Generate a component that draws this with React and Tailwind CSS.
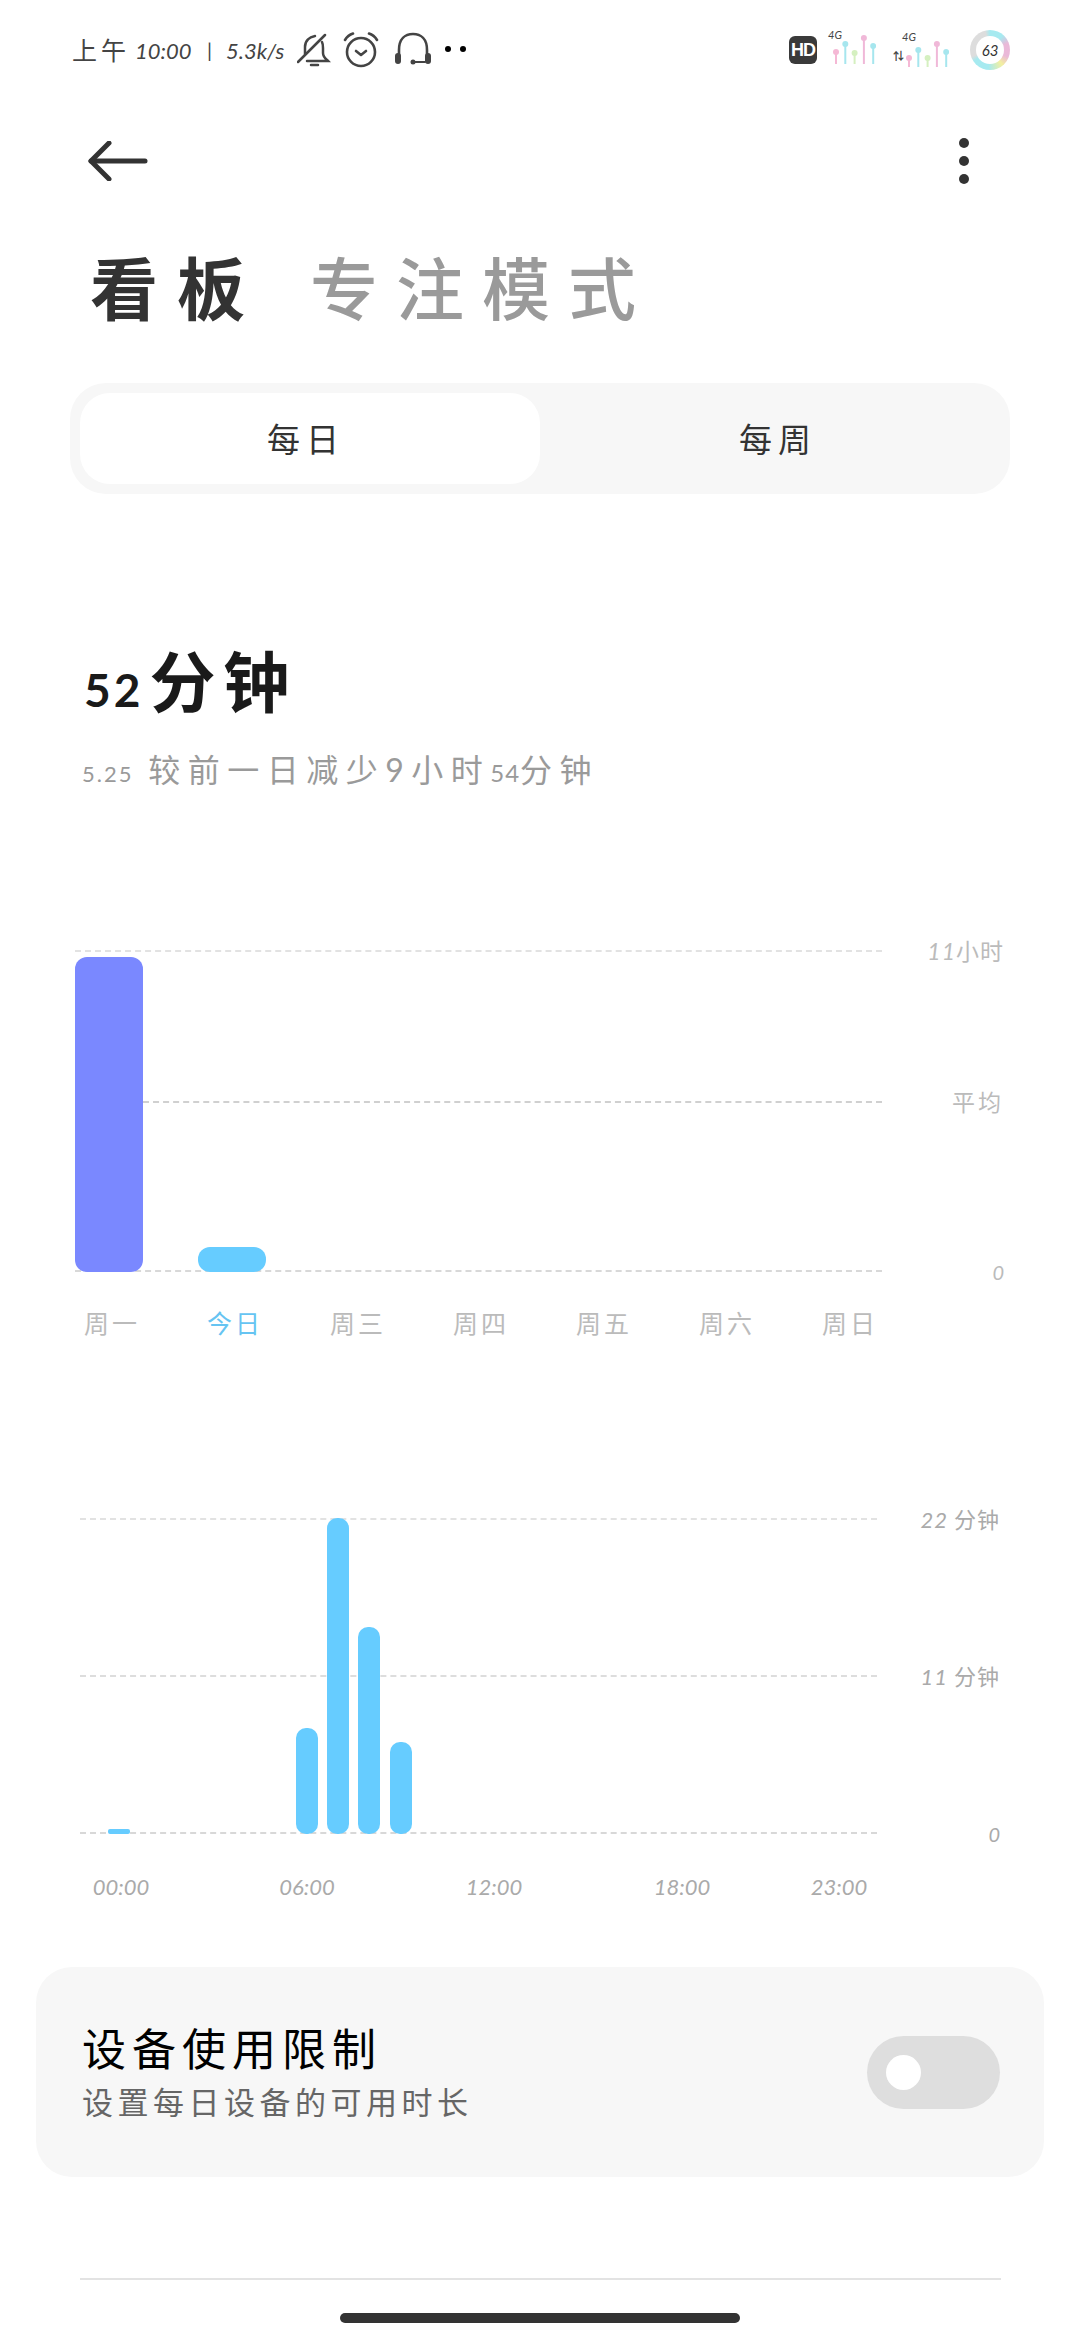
const cjk = "font-['Noto_Sans_CJK_SC','Lato',sans-serif]";

const weekBars = [
  { label: "周一", height: "h-[315px]", color: "bg-[#7a88ff]", text: "text-[#bbbbbb]" },
  { label: "今日", height: "h-[25px]", color: "bg-[#66ccff]", text: "text-[#66c4f2]" },
  { label: "周三", height: "h-0", color: "", text: "text-[#bbbbbb]" },
  { label: "周四", height: "h-0", color: "", text: "text-[#bbbbbb]" },
  { label: "周五", height: "h-0", color: "", text: "text-[#bbbbbb]" },
  { label: "周六", height: "h-0", color: "", text: "text-[#bbbbbb]" },
  { label: "周日", height: "h-0", color: "", text: "text-[#bbbbbb]" },
];

const hours = [
  { label: "00:00", margin: "ml-0" },
  { label: "06:00", margin: "ml-[128px]" },
  { label: "12:00", margin: "ml-[129px]" },
  { label: "18:00", margin: "ml-[130px]" },
  { label: "23:00", margin: "ml-[99px]" },
];

function Pins({ tops, className }) {
  const colors = ["#f5b8d5", "#a6e6ee", "#d5f0c0", "#f0b8d8", "#a6e6ee"];
  return (
    <svg width="48" height="36" viewBox="0 0 48 36" className={className}>
      {tops.map((t, i) => (
        <g key={i}>
          <line x1={8 + i * 9.3} y1={t} x2={8 + i * 9.3} y2="32" stroke={colors[i]} strokeWidth="2" />
          <circle cx={8 + i * 9.3} cy={t} r="3" fill={colors[i]} />
        </g>
      ))}
    </svg>
  );
}

function StatusBar() {
  return (
    <div className={`flex items-center h-[40px] mt-[30px] pl-[72px] pr-[70px] text-[#444444] ${cjk}`}>
      <span className="text-[25px] tracking-[4px] w-[63px] whitespace-nowrap">上午</span>
      <span className="text-[22px] italic font-['Lato'] w-[72px]">10:00</span>
      <span className="text-[20px] font-['Lato'] w-[19px]">|</span>
      <span className="text-[22px] italic font-['Lato'] w-[71px]">5.3k/s</span>
      <svg width="34" height="34" viewBox="0 0 34 34" fill="none" stroke="#444444" strokeWidth="2.5" strokeLinecap="round">
        <path d="M1 29 L28 2" />
        <path d="M8 21 V14 C8 8 12 4 18 3" />
        <path d="M25 9 C26 11 26 13 26 15 V20 C26 24 29 26 31 28 H10" />
        <path d="M14 32 H21" />
      </svg>
      <svg width="36" height="36" viewBox="0 0 36 36" fill="none" stroke="#444444" strokeWidth="2.6" strokeLinecap="round" strokeLinejoin="round" className="ml-[12px]">
        <circle cx="18" cy="20" r="14" />
        <path d="M13 19 L18 23 L23 19" />
        <path d="M2 8 Q5 3 10 1.5" />
        <path d="M34 8 Q31 3 26 1.5" />
      </svg>
      <svg width="38" height="36" viewBox="0 0 38 36" fill="none" stroke="#444444" strokeWidth="2.6" strokeLinecap="round" className="ml-[15px]">
        <path d="M5 26 V18 C5 7 11 2 19 2 C27 2 33 7 33 18 V26" />
        <circle cx="19" cy="30" r="2.5" fill="#444444" stroke="none" />
        <path d="M19 30 H31" strokeWidth="2" />
        <rect x="1" y="21" width="6" height="11" rx="3" fill="#444444" stroke="none" />
        <rect x="31" y="21" width="6" height="11" rx="3" fill="#444444" stroke="none" />
      </svg>
      <div className="flex gap-[9px] ml-[13px] -mt-[2px]">
        <div className="w-[6px] h-[6px] rounded-full bg-black" />
        <div className="w-[6px] h-[6px] rounded-full bg-black" />
      </div>
      <div className="ml-auto w-[28px] h-[28px] rounded-[6px] bg-[#3a3a3a] text-white text-[18px] font-bold font-['Liberation_Sans'] flex items-center justify-center tracking-[-1px]">HD</div>
      <div className="relative w-[48px] h-[36px] ml-[11px]">
        <span className="absolute left-0 top-[-5px] text-[11px] italic font-['Lato']">4G</span>
        <Pins tops={[20, 12, 21, 6, 14]} />
      </div>
      <div className="relative w-[50px] h-[36px] ml-[20px]">
        <span className="absolute left-[6px] top-[-3px] text-[11px] italic font-['Lato']">4G</span>
        <span className="absolute left-[-3px] top-[18px] text-[11px] font-bold leading-none">⇅</span>
        <Pins tops={[23, 15, 23, 9, 17]} className="ml-[5px] mt-[3px]" />
      </div>
      <div className="ml-[24px] w-[40px] h-[40px] rounded-full flex items-center justify-center bg-[conic-gradient(#a6eaf0_0deg,#a6eaf0_40deg,#eab8d8_70deg,#eab8d8_110deg,#f3f0a0_140deg,#a6eaf0_185deg,#a6eaf0_235deg,#dddddd_250deg,#dddddd_345deg,#a6eaf0_360deg)]">
        <div className="w-[28px] h-[28px] rounded-full bg-white flex items-center justify-center text-[15px] italic font-['Lato'] text-[#333333]">63</div>
      </div>
    </div>
  );
}

function WeekChart() {
  return (
    <div className="mt-[154px] pl-[75px]">
      <div className="relative h-[322px] w-[807px]">
        <div className="absolute inset-0 flex flex-col justify-between">
          <div className="border-t-2 border-dashed border-[#e2e2e2]" />
          <div className="border-t-2 border-dashed border-[#d0d0d0] ml-[68px] mt-[-19px]" />
          <div className="border-t-2 border-dashed border-[#d8d8d8]" />
        </div>
        <div className="absolute left-[825px] top-[-16px] w-[104px] text-right text-[23px] leading-[32px] text-[#bbbbbb] tracking-[1px]">
          <span className="italic font-['Lato']">11</span>小时
        </div>
        <div className="absolute left-[825px] top-[135px] w-[104px] text-right text-[23px] leading-[32px] text-[#bbbbbb] tracking-[3px]">平均</div>
        <div className="absolute left-[825px] top-[306px] w-[104px] text-right text-[20px] leading-[32px] text-[#bbbbbb] italic font-['Lato']">0</div>
        <div className="relative h-full flex items-end gap-[55px]">
          {weekBars.map((b) => (
            <div key={b.label} className={`w-[68px] ${b.height} ${b.color} rounded-[12px]`} />
          ))}
        </div>
      </div>
      <div className="flex gap-[55px] mt-[32px] pl-[3px]">
        {weekBars.map((b) => (
          <div key={b.label} className={`w-[68px] text-center whitespace-nowrap text-[25px] leading-[36px] tracking-[3px] ${b.text}`}>{b.label}</div>
        ))}
      </div>
    </div>
  );
}

function DayChart() {
  return (
    <div className="mt-[178px] pl-[80px]">
      <div className="relative h-[316px] w-[797px]">
        <div className="absolute inset-0 flex flex-col justify-between">
          <div className="border-t-2 border-dashed border-[#e2e2e2]" />
          <div className="border-t-2 border-dashed border-[#dddddd]" />
          <div className="border-t-2 border-dashed border-[#d8d8d8]" />
        </div>
        <div className="absolute left-[800px] top-[-16px] w-[120px] text-right text-[22px] leading-[32px] text-[#aaaaaa] tracking-[1px]">
          <span className="italic font-['Lato']">22</span> 分钟
        </div>
        <div className="absolute left-[800px] top-[141px] w-[120px] text-right text-[22px] leading-[32px] text-[#aaaaaa] tracking-[1px]">
          <span className="italic font-['Lato']">11</span> 分钟
        </div>
        <div className="absolute left-[800px] top-[300px] w-[120px] text-right text-[20px] leading-[32px] text-[#aaaaaa] italic font-['Lato']">0</div>
        <div className="relative h-full flex items-end pl-[28px]">
          <div className="w-[22px] h-[5px] rounded-[2px] bg-[#66ccff]" />
          <div className="w-[22px] h-[106px] rounded-[10px] bg-[#66ccff] ml-[166px]" />
          <div className="w-[22px] h-[316px] rounded-[10px] bg-[#66ccff] ml-[9px]" />
          <div className="w-[22px] h-[207px] rounded-[10px] bg-[#66ccff] ml-[9px]" />
          <div className="w-[22px] h-[92px] rounded-[10px] bg-[#66ccff] ml-[10px]" />
        </div>
      </div>
      <div className="flex pl-[12px] mt-[38px] text-[22px] leading-[30px] italic font-['Lato'] text-[#aaaaaa]">
        {hours.map((h) => (
          <span key={h.label} className={`w-[58px] text-center ${h.margin}`}>{h.label}</span>
        ))}
      </div>
    </div>
  );
}

export default function App() {
  return (
    <div className={`relative w-[1080px] h-[2340px] bg-white overflow-hidden ${cjk}`}>
      <StatusBar />
      <div className="flex items-center justify-between h-[40px] mt-[71px] pl-[88px] pr-[111px]">
        <svg width="60" height="40" viewBox="0 0 60 40" fill="none" stroke="#333333" strokeWidth="5" strokeLinecap="round" strokeLinejoin="round">
          <path d="M3 20 H57" />
          <path d="M21 2 L3 20 L21 38" />
        </svg>
        <div className="flex flex-col gap-[8px]">
          <div className="w-[10px] h-[10px] rounded-full bg-[#333333]" />
          <div className="w-[10px] h-[10px] rounded-full bg-[#333333]" />
          <div className="w-[10px] h-[10px] rounded-full bg-[#333333]" />
        </div>
      </div>
      <div className="flex mt-[55px] pl-[90px] text-[68px] leading-[100px] tracking-[18px] font-bold whitespace-nowrap">
        <span className="text-[#333333] w-[220px] tracking-[19px]">看板</span>
        <span className="text-[#9a9a9a] font-medium">专注模式</span>
      </div>
      <div className="mx-[70px] mt-[47px] h-[111px] rounded-[36px] bg-[#f7f7f7] p-[10px] flex">
        <div className="w-[460px] rounded-[30px] bg-white flex items-center justify-center pr-[8px] text-[33px] tracking-[6px] text-[#333333]">每日</div>
        <div className="flex-1 flex items-center justify-center pl-[16px] text-[33px] tracking-[6px] text-[#333333]">每周</div>
      </div>
      <div className="mt-[144px] pl-[84px] text-[66px] leading-[80px] font-bold text-[#1a1a1a] tracking-[8px] whitespace-nowrap">
        <span className="text-[46px] font-['Lato'] tracking-[3px] mr-[6px]">52</span>分钟
      </div>
      <div className="mt-[16px] pl-[82px] text-[32px] leading-[44px] text-[#9a9a9a] tracking-[7.5px] whitespace-nowrap">
        <span className="text-[22px] font-['Lato'] tracking-[2px]">5.25</span> 较前一日减少<span className="font-['Lato']">9</span>小时<span className="text-[24px] font-['Lato'] tracking-[1px]">54</span>分钟
      </div>
      <WeekChart />
      <DayChart />
      <div className="mx-[36px] mt-[65px] h-[210px] rounded-[36px] bg-[#f7f7f7] pl-[46px] pr-[44px] flex items-center justify-between">
        <div>
          <div className="text-[44px] leading-[54px] tracking-[6px] text-black whitespace-nowrap">设备使用限制</div>
          <div className="mt-[4px] text-[31px] leading-[46px] tracking-[4.5px] text-[#666666] whitespace-nowrap">设置每日设备的可用时长</div>
        </div>
        <div className="w-[133px] h-[73px] rounded-full bg-[#dedede] flex items-center pl-[19px]">
          <div className="w-[35px] h-[35px] rounded-full bg-white" />
        </div>
      </div>
      <div className="mx-[80px] mt-[101px] w-[921px] h-[2px] bg-[#e3e3e3]" />
      <div className="mx-auto mt-[33px] w-[400px] h-[10px] rounded-full bg-[#333333]" />
    </div>
  );
}
